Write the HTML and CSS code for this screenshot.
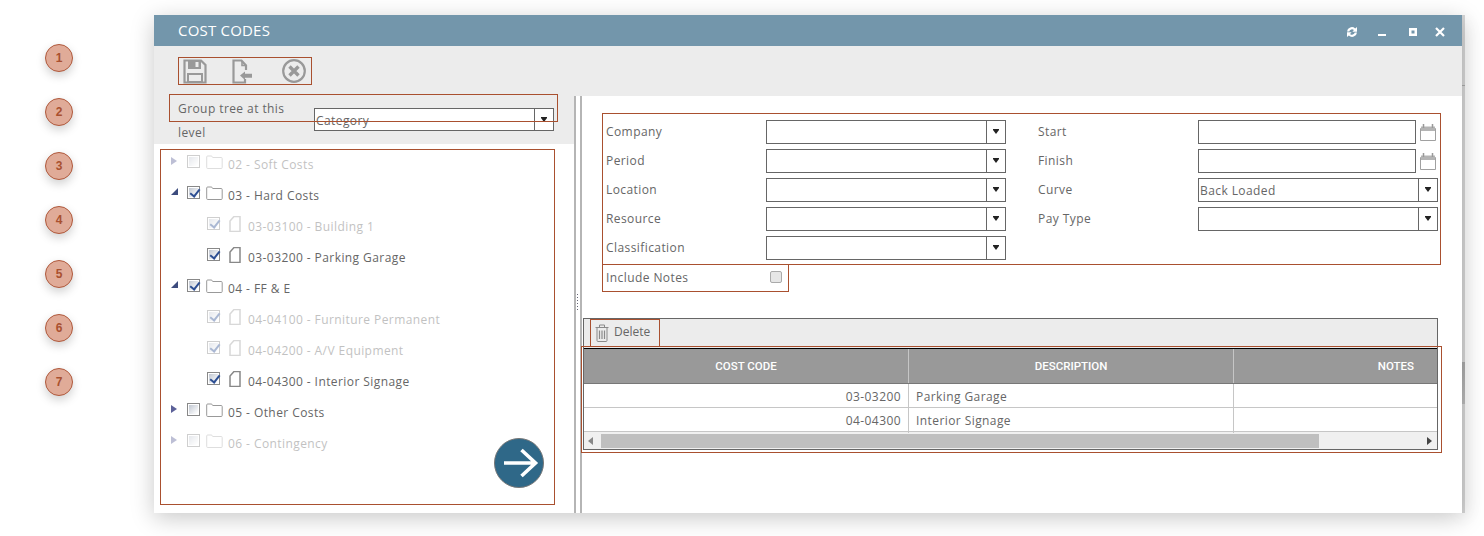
FILE: index.html
```html
<!DOCTYPE html>
<html lang="en">
<head>
<meta charset="utf-8">
<title>Cost Codes</title>
<link rel="stylesheet" href="styles.css">
</head>
<body>
<div class="page">
  <aside class="rail">
    <span class="badge">1</span><span class="badge">2</span><span class="badge">3</span><span class="badge">4</span><span class="badge">5</span><span class="badge">6</span><span class="badge">7</span>
  </aside>
  <section class="window">
    <header class="titlebar">
      <h1 class="title">COST CODES</h1>
      <div class="winctl">
        <svg class="wi wi-a" width="12" height="12" viewBox="0 0 12 12"><path d="M1 5.500A4.800 4.800 0 0 1 9.200 2.600L11 1v4.800H6.400l1.500-1.700A2.700 2.700 0 0 0 3.300 5.500zM11 6.500A4.800 4.800 0 0 1 2.800 9.400L1 11V6.200h4.600L4.100 7.900a2.700 2.700 0 0 0 4.600-1.400z" fill="#fff"/></svg>
        <svg class="wi wi-b" width="10" height="12" viewBox="0 0 10 12"><rect x="1" y="8" width="8" height="2" fill="#fff"/></svg>
        <svg class="wi wi-c" width="10" height="12" viewBox="0 0 10 12"><path d="M1 2h8v8H1zM3.500 4.500v3h3v-3z" fill="#fff" fill-rule="evenodd"/></svg>
        <svg class="wi wi-d" width="10" height="12" viewBox="0 0 10 12"><path d="M1 2l8 8M9 2l-8 8" stroke="#fff" stroke-width="2.200" fill="none"/></svg>
      </div>
    </header>
    <div class="toolbar">
      <div class="tools">
        <svg class="tool-save" width="24" height="25" viewBox="0 0 24 25"><path d="M1.500 1.500h16.500l4.500 4.500v17.500h-21z" fill="none" stroke="#999" stroke-width="2.200"/><rect x="5" y="2" width="13" height="8" fill="#999"/><rect x="12.500" y="3" width="3" height="5" fill="#ececec"/><rect x="5" y="15" width="14" height="8" fill="none" stroke="#999" stroke-width="2"/></svg>
        <svg class="tool-doc" width="20" height="25" viewBox="0 0 20 25"><path d="M14 11V6.500L9.500 1.500H1.500v22H13V20" fill="none" stroke="#999" stroke-width="2.200"/><path d="M10 2v4.500h4" fill="none" stroke="#999" stroke-width="1.600"/><path d="M8 16.500l5-4v2.300h7v3.900h-7v2.300z" fill="#999"/></svg>
        <svg class="tool-x" width="24" height="24" viewBox="0 0 24 24"><circle cx="12" cy="12" r="10.800" fill="none" stroke="#999" stroke-width="2.200"/><path d="M7.500 7.500l9 9M16.500 7.500l-9 9" stroke="#999" stroke-width="3.400" fill="none"/></svg>
      </div>
    </div>
    <div class="body">
      <div class="left">
        <div class="groupby">
          <label class="groupby-label">Group tree at this level</label>
          <div class="combo combo-top"><span class="combo-val">Category</span><span class="combo-btn"><i class="caret"></i></span></div>
          <div class="callout"></div>
        </div>
        <div class="tree">
          <div class="node dim"><i class="tw closed"></i><i class="cb"></i><svg class="folder" width="17" height="15" viewBox="0 0 17 15"><path d="M1 13V2.500Q1 1.500 2 1.500h3.500Q6.500 1.500 7 3h8.500q1 0 1 1v9q0 1-1 1H2q-1 0-1-1z" fill="none" stroke="#999" transform="translate(-.3 -.5)"/></svg><span>02 - Soft Costs</span></div>
          <div class="node"><i class="tw open"></i><i class="cb on"></i><svg class="folder" width="17" height="15" viewBox="0 0 17 15"><path d="M1 13V2.500Q1 1.500 2 1.500h3.500Q6.500 1.500 7 3h8.500q1 0 1 1v9q0 1-1 1H2q-1 0-1-1z" fill="none" stroke="#999" transform="translate(-.3 -.5)"/></svg><span>03 - Hard Costs</span></div>
          <div class="node leaf dim"><i class="cb on"></i><svg class="file" width="12" height="16" viewBox="0 0 12 16"><path d="M1 15.500V5l4-4.500h6v15z" fill="none" stroke="#888" stroke-width="1.500"/></svg><span>03-03100 - Building 1</span></div>
          <div class="node leaf"><i class="cb on"></i><svg class="file" width="12" height="16" viewBox="0 0 12 16"><path d="M1 15.500V5l4-4.500h6v15z" fill="none" stroke="#888" stroke-width="1.500"/></svg><span>03-03200 - Parking Garage</span></div>
          <div class="node"><i class="tw open"></i><i class="cb on"></i><svg class="folder" width="17" height="15" viewBox="0 0 17 15"><path d="M1 13V2.500Q1 1.500 2 1.500h3.500Q6.500 1.500 7 3h8.500q1 0 1 1v9q0 1-1 1H2q-1 0-1-1z" fill="none" stroke="#999" transform="translate(-.3 -.5)"/></svg><span>04 - FF &amp; E</span></div>
          <div class="node leaf dim"><i class="cb on"></i><svg class="file" width="12" height="16" viewBox="0 0 12 16"><path d="M1 15.500V5l4-4.500h6v15z" fill="none" stroke="#888" stroke-width="1.500"/></svg><span>04-04100 - Furniture Permanent</span></div>
          <div class="node leaf dim"><i class="cb on"></i><svg class="file" width="12" height="16" viewBox="0 0 12 16"><path d="M1 15.500V5l4-4.500h6v15z" fill="none" stroke="#888" stroke-width="1.500"/></svg><span>04-04200 - A/V Equipment</span></div>
          <div class="node leaf"><i class="cb on"></i><svg class="file" width="12" height="16" viewBox="0 0 12 16"><path d="M1 15.500V5l4-4.500h6v15z" fill="none" stroke="#888" stroke-width="1.500"/></svg><span>04-04300 - Interior Signage</span></div>
          <div class="node"><i class="tw closed"></i><i class="cb"></i><svg class="folder" width="17" height="15" viewBox="0 0 17 15"><path d="M1 13V2.500Q1 1.500 2 1.500h3.500Q6.500 1.500 7 3h8.500q1 0 1 1v9q0 1-1 1H2q-1 0-1-1z" fill="none" stroke="#999" transform="translate(-.3 -.5)"/></svg><span>05 - Other Costs</span></div>
          <div class="node dim"><i class="tw closed"></i><i class="cb"></i><svg class="folder" width="17" height="15" viewBox="0 0 17 15"><path d="M1 13V2.500Q1 1.500 2 1.500h3.500Q6.500 1.500 7 3h8.500q1 0 1 1v9q0 1-1 1H2q-1 0-1-1z" fill="none" stroke="#999" transform="translate(-.3 -.5)"/></svg><span>06 - Contingency</span></div>
          <button class="go" type="button" aria-label="Next"><svg width="36" height="32" viewBox="0 0 36 32"><path d="M1 16h31M18.500 3l14 13-14 13" fill="none" stroke="#fff" stroke-width="3.600"/></svg></button>
        </div>
      </div>
      <div class="splitter"><i class="grip"></i></div>
      <div class="right">
        <form class="form">
          <span class="lbl">Company</span><div class="combo"><span class="combo-val"></span><span class="combo-btn"><i class="caret"></i></span></div>
          <span class="lbl">Start</span><div class="date"><div class="dateinput"></div><svg class="cal" width="16" height="17" viewBox="0 0 16 17"><path d="M.500 4.500h15v12H.500z" fill="none" stroke="#a0a0a0"/><path d="M1 2.500h14V7H1z" fill="#b4b4b4"/><path d="M3.500 0v4M12.500 0v4" stroke="#999" stroke-width="1.500"/></svg></div>
          <span class="lbl">Period</span><div class="combo"><span class="combo-val"></span><span class="combo-btn"><i class="caret"></i></span></div>
          <span class="lbl">Finish</span><div class="date"><div class="dateinput"></div><svg class="cal" width="16" height="17" viewBox="0 0 16 17"><path d="M.500 4.500h15v12H.500z" fill="none" stroke="#a0a0a0"/><path d="M1 2.500h14V7H1z" fill="#b4b4b4"/><path d="M3.500 0v4M12.500 0v4" stroke="#999" stroke-width="1.500"/></svg></div>
          <span class="lbl">Location</span><div class="combo"><span class="combo-val"></span><span class="combo-btn"><i class="caret"></i></span></div>
          <span class="lbl">Curve</span><div class="combo"><span class="combo-val">Back Loaded</span><span class="combo-btn"><i class="caret"></i></span></div>
          <span class="lbl">Resource</span><div class="combo"><span class="combo-val"></span><span class="combo-btn"><i class="caret"></i></span></div>
          <span class="lbl">Pay Type</span><div class="combo"><span class="combo-val"></span><span class="combo-btn"><i class="caret"></i></span></div>
          <span class="lbl">Classification</span><div class="combo"><span class="combo-val"></span><span class="combo-btn"><i class="caret"></i></span></div>
        </form>
        <div class="notes"><span class="lbl">Include Notes</span><i class="notes-cb"></i></div>
        <div class="gridwrap">
          <div class="gridbar">
            <button class="del" type="button"><svg width="14" height="18" viewBox="0 0 14 18"><path d="M.500 3.500h13M4.500 3V1h5v2M2 4v12.500q0 1 1 1h8q1 0 1-1V4" fill="none" stroke="#8a8a8a"/><path d="M4.500 6.500v8.500M7 6.500v8.500M9.500 6.500v8.500" stroke="#8a8a8a" stroke-width="1.200"/></svg><span>Delete</span></button>
          </div>
          <div class="ghead"><div>COST CODE</div><div>DESCRIPTION</div><div class="ghead-notes">NOTES</div></div>
          <div class="grow"><div class="num">03-03200</div><div>Parking Garage</div><div></div></div>
          <div class="grow"><div class="num">04-04300</div><div>Interior Signage</div><div></div></div>
          <div class="hscroll"><i class="arr arr-l"></i><div class="thumb"></div><i class="arr arr-r"></i></div>
          <div class="gridcallout"></div>
        </div>
      </div>
    </div>
  </section>
  <div class="backdrop"></div>
</div>
</body>
</html>
```
FILE: styles.css
```css
* { box-sizing: border-box; }
html, body { margin: 0; height: 100%; background: #fff; overflow: hidden; }
body { font-family: "Open Sans", "Liberation Sans", sans-serif; font-size: 12px; color: #666; letter-spacing: .42px; }
i { display: block; font-style: normal; }

.page { display: flex; align-items: flex-start; height: 536px; }

.rail { width: 154px; flex: none; padding: 44px 0 0 45px; display: flex; flex-direction: column; gap: 26px; }
.badge { width: 28px; height: 28px; border-radius: 50%; background: #e0ab98; border: 1.500px solid #b0593c; color: #a9502f; font: bold 12px/27px "Liberation Sans", sans-serif; text-align: center; box-shadow: 0 4px 10px rgba(0,0,0,.18); letter-spacing: 0; }

.window { width: 1308px; height: 498px; margin-top: 15px; flex: none; background: #fff; box-shadow: 0 5px 22px rgba(0,0,0,.22); display: flex; flex-direction: column; position: relative; z-index: 1; }
.backdrop { width: 3px; height: 498px; margin-top: 15px; flex: none; background: linear-gradient(#d6d6d6 70px, #aaa 70px, #aaa 71px, #d6d6d6 71px, #d6d6d6 347px, #aaa 347px, #bbb 389px, #d6d6d6 389px); box-shadow: 0 5px 18px rgba(0,0,0,.14); }

.titlebar { height: 31px; flex: none; background: #7396ab; display: flex; align-items: center; padding-left: 24px; }
.title { margin: 0; font-weight: 400; font-size: 15px; color: #fff; letter-spacing: .2px; flex: 1; line-height: 31px; }
.winctl { display: flex; align-items: center; padding-top: 2px; }
.wi { display: block; }
.wi-b { margin-left: 19px; }
.wi-c { margin-left: 21px; }
.wi-d { margin-left: 17px; margin-right: 17px; }

.toolbar { height: 50px; flex: none; background: #ececec; padding: 11px 0 0 24px; }
.tools { width: 134px; height: 28px; border: 1px solid #a9502f; display: flex; align-items: center; padding: 0 0 0 4px; }
.tool-save { display: block; }
.tool-doc { display: block; margin-left: 25px; }
.tool-x { display: block; margin-left: 30px; }

.body { flex: 1; display: flex; min-height: 0; }
.left { width: 420px; flex: none; display: flex; flex-direction: column; }
.groupby { height: 48px; flex: none; background: #ececec; display: flex; align-items: flex-start; padding-left: 24px; position: relative; }
.groupby-label { width: 136px; flex: none; line-height: 24px; padding-top: 1px; color: #666; }
.callout { position: absolute; left: 15px; top: -2px; width: 389px; height: 28px; border: 1px solid #a9502f; pointer-events: none; }

.combo { display: flex; height: 24px; width: 240px; background: #fff; border: 1px solid #666; }
.combo-top { margin-top: 12px; height: 23px; }
.combo-val { flex: 1; padding-left: 1px; line-height: 23px; color: #666; white-space: nowrap; overflow: hidden; }
.combo-btn { width: 19px; flex: none; border-left: 1px solid #666; display: flex; align-items: center; justify-content: center; }
.caret { width: 0; height: 0; border: 3.500px solid transparent; border-top: 4px solid #222; border-bottom: 0; box-shadow: 0 -1px 0 #222; }

.tree { width: 395px; height: 356px; margin: 5px 0 0 6px; border: 1px solid #a9502f; position: relative; }
.node { height: 31px; display: flex; align-items: center; padding-bottom: 5px; white-space: nowrap; color: #666; }
.node > span { margin-left: 5px; padding-top: 2px; }
.node.dim { opacity: .4; }
.node.dim .folder, .node.dim .file { opacity: .8; }
.tw { width: 0; height: 0; margin: -5px 0 0 10px; flex: none; }
.tw.closed { border-left: 6px solid #5c6199; border-top: 4px solid transparent; border-bottom: 4px solid transparent; margin-right: 10px; }
.tw.open { border-right: 7px solid #3d4c7e; border-top: 7px solid transparent; margin-left: 10px; margin-right: 9px; }
.cb { width: 13px; height: 13px; flex: none; margin: -3px 6px 0 0; border: 1px solid #888; background: linear-gradient(135deg, #b9c0cc, #fff 85%); box-shadow: inset 0 0 0 1px #fff; position: relative; }
.cb.on::after { content: ""; position: absolute; left: 3.500px; top: 0; width: 4px; height: 8px; border: solid #2d4f93; border-width: 0 2px 2px 0; transform: rotate(38deg); }
.folder { display: block; flex: none; margin-top: -2px; }
.leaf { padding-left: 46px; }
.leaf .cb { margin-right: 9px; }
.file { display: block; flex: none; margin: -2px 2px 0 0; }

.go { position: absolute; left: 333px; top: 288px; width: 50px; height: 50px; border: 1px solid #777; border-radius: 50%; background: #2f6888; padding: 0 0 0 3px; display: flex; align-items: center; justify-content: center; }
.go svg { display: block; }

.splitter { width: 8px; flex: none; border-left: 2px solid #b5b5b5; border-right: 2px solid #b5b5b5; position: relative; }
.grip { position: absolute; left: 1px; top: 198px; width: 1px; height: 18px; background: repeating-linear-gradient(#667 0 1px, transparent 1px 3px); }

.right { flex: 1; min-width: 0; position: relative; }
.form { width: 839px; height: 152px; margin: 17px 0 0 20px; padding: 6px 0 0 3px; border: 1px solid #a9502f; display: grid; grid-template-columns: 160px 240px 32px 160px 240px; grid-auto-rows: 24px; row-gap: 5px; align-items: center; }
.lbl { line-height: 24px; color: #666; }
.form .lbl:nth-child(4n+3) { grid-column: 4; }
.date { display: flex; align-items: center; width: 240px; }
.dateinput { width: 218px; height: 24px; border: 1px solid #666; background: #fff; }
.cal { display: block; margin-left: 4px; }

.notes { width: 187px; height: 28px; margin: -1px 0 0 20px; padding-left: 3px; border: 1px solid #a9502f; display: flex; align-items: center; justify-content: space-between; }
.notes-cb { width: 12px; height: 12px; margin-right: 6px; margin-top: -2px; border: 1px solid #aaa; border-radius: 2px; background: #e6e6e6; }

.gridwrap { width: 855px; margin: 26px 0 0 1px; position: relative; border: 1px solid #666; }
.gridbar { height: 29px; background: #ececec; padding: 0 0 0 6px; }
.del { width: 70px; height: 28px; padding: 0 0 0 4px; border: 1px solid #a9502f; background: transparent; display: flex; align-items: center; gap: 5px; font: inherit; color: #666; }
.del svg { display: block; }
.del span { padding-bottom: 3px; }
.ghead, .grow { display: grid; grid-template-columns: 325px 325px 1fr; }
.ghead { height: 36px; background: #999; border-top: 1px solid #000; border-bottom: 1px solid #777; color: #fff; font: 500 11.5px/34px Roboto, sans-serif; letter-spacing: 0; text-align: center; }
.ghead > div { border-right: 1px solid #c6c6c6; }
.ghead > .ghead-notes { border-right: 0; text-align: right; padding-right: 23px; }
.grow { height: 24px; border-bottom: 1px solid #c6c6c6; line-height: 25px; color: #666; }
.grow > div { padding: 0 7px 0 7px; border-right: 1px solid #c6c6c6; }
.grow > div:last-child { border-right: 0; }
.grow .num { text-align: right; }
.hscroll { height: 17px; background: #f0f0f0; display: flex; align-items: center; padding: 0 5px 0 4px; }
.thumb { width: 718px; height: 14px; margin-left: 8px; background: #bfbfbf; }
.arr { width: 0; height: 0; border-top: 4px solid transparent; border-bottom: 4px solid transparent; flex: none; }
.arr-l { border-right: 5px solid #888; }
.arr-r { border-left: 5px solid #444; margin-left: auto; }
.gridcallout { position: absolute; left: -3px; top: 27px; width: 861px; height: 107px; border: 1px solid #a9502f; pointer-events: none; }
```
